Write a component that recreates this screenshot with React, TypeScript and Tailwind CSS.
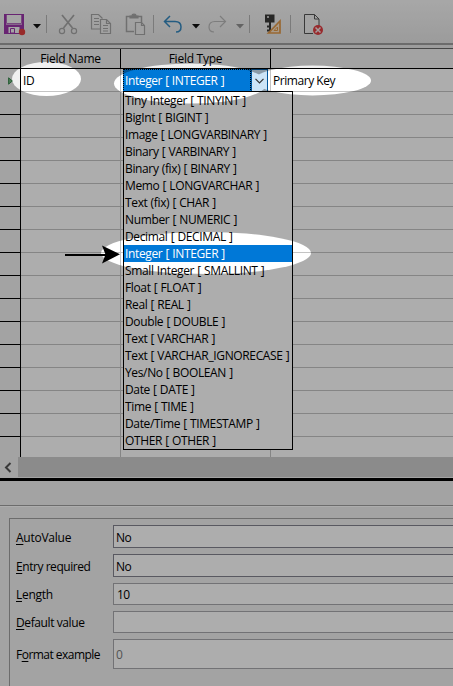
import React from "react";

const types = [
  "Tiny Integer [ TINYINT ]", "BigInt [ BIGINT ]", "Image [ LONGVARBINARY ]", "Binary [ VARBINARY ]",
  "Binary (fix) [ BINARY ]", "Memo [ LONGVARCHAR ]", "Text (fix) [ CHAR ]", "Number [ NUMERIC ]",
  "Decimal [ DECIMAL ]", "Integer [ INTEGER ]", "Small Integer [ SMALLINT ]", "Float [ FLOAT ]",
  "Real [ REAL ]", "Double [ DOUBLE ]", "Text [ VARCHAR ]", "Text [ VARCHAR_IGNORECASE ]",
  "Yes/No [ BOOLEAN ]", "Date [ DATE ]", "Time [ TIME ]", "Date/Time [ TIMESTAMP ]", "OTHER [ OTHER ]",
];

const properties = [
  { pre: "", key: "A", rest: "utoValue", value: "No", box: "h-[23px] border-[#83838f] pl-[2px]", gap: "mb-[6px]", track: "tracking-[-0.25px]" },
  { pre: "", key: "E", rest: "ntry required", value: "No", box: "h-[23px] border-[#83838f] pl-[2px]", gap: "mb-[6px]", track: "tracking-[-0.45px]" },
  { pre: "", key: "L", rest: "ength", value: "10", box: "h-[22px] border-[#a9a9ad] pl-[3px]", gap: "mb-[6px]", track: "tracking-[-0.3px]" },
  { pre: "", key: "D", rest: "efault value", value: "", box: "h-[22px] border-[#a9a9ad] pl-[3px]", gap: "mb-[6px]", track: "tracking-[-0.4px]" },
  { pre: "F", key: "o", rest: "rmat example", value: "0", box: "h-[30px] border-[#a9a9ad] pl-[2px] text-[#7b7b7b]", gap: "", track: "tracking-[-0.53px]" },
];

function Toolbar() {
  return (
    <svg className="block h-[43px] w-full shrink-0" viewBox="0 0 453 43" preserveAspectRatio="xMinYMin slice" fill="none">
      <defs>
        <linearGradient id="bar" x1="0" y1="0" x2="0" y2="1">
          <stop stopColor="#f7f7f7" />
          <stop offset="1" stopColor="#e5e5e5" />
        </linearGradient>
      </defs>
      <rect width="453" height="43" fill="url(#bar)" />
      {/* save */}
      <path d="M5 15h18v18H5z" fill="#f4f4f4" stroke="#9a35a8" strokeWidth="2" />
      <path d="M4.500 24.500h19v9.500h-19z" fill="#9a35a8" />
      <path d="M6.500 15v8.500h15V15" fill="#f4f4f4" stroke="#b26abb" />
      <path d="M8.500 27h11v6h-11z" fill="#f4f4f4" />
      <path d="M10.500 28.500h4V33h-4z" fill="#f4f4f4" stroke="#9a35a8" />
      <circle cx="22" cy="32" r="3.200" fill="#e03e3e" />
      <path d="M33 24h8l-4 4.500z" fill="#111" />
      <path d="M46.500 15v18M153.500 15v18M249.500 15v18M290.500 15v18" stroke="#b5b5b5" />
      {/* cut */}
      <g stroke="#a6a6a6" strokeWidth="1.200">
        <path d="m62 15 10.500 13M74 15 63.500 28" strokeWidth="1.700" />
        <circle cx="62" cy="31" r="2.600" /><circle cx="74" cy="31" r="2.600" />
        {/* copy */}
        <path d="M100 29h-8.500V14.500h7l4 4" />
        <path d="M94 18.500h5M94 21.500h5M94 24.500h5" />
        <path d="M100.500 19.500h6l4 4v10h-10z" fill="#eee" />
        <path d="M106.500 19.500v4h4M103 25.500h5M103 28.500h5M103 31h5" />
        {/* paste */}
        <path d="M134 31.500h-7.500v-15h15v6" strokeWidth="1.500" />
        <path d="M130 18h8v-2h-2c0-2.500-4-2.500-4 0h-2z" fill="#a6a6a6" />
        <path d="M135.500 22.500h6l3 3v9h-9z" fill="#eee" />
        <path d="M141.500 22.500v3h3" />
      </g>
      <path d="m170 16-5.500 5.500L170 27M165 21.500h10c4 0 6 2.500 6 5.500s-2 5-5 5" stroke="#3588bf" strokeWidth="1.500" />
      <path d="M192 24h8l-4 4.500z" fill="#111" />
      <path d="m220 16 5.500 5.500L220 27M225 21.500h-10c-4 0-6 2.500-6 5.500s2 5 5 5" stroke="#b8b8b8" strokeWidth="1.200" />
      <path d="M236 24h8l-4 4.500z" fill="#929292" />
      {/* index design */}
      <path d="M265 14.500h9.500v8H271v10.500l-2-1.500h-2v-2h2v-2h-2v-2h2v-3h-4z" fill="#3a3a38" />
      <path d="M267 17h2" stroke="#eee" strokeWidth="1.500" />
      <path d="M280 21v12h-11.500z" fill="#f8e3ca" stroke="#e19a4b" strokeWidth="1.700" />
      <path d="M277.500 27v3.500H274z" stroke="#e19a4b" />
      {/* remove document */}
      <path d="M305 33.500h-.5v-19h10l4.500 4.500v8M314.500 14.500V19h4.500M305 33.500h8" fill="#f1f1f1" stroke="#555" />
      <circle cx="318" cy="30" r="5" fill="#e13e43" />
      <path d="m315.500 27.500 5 5m0-5-5 5" stroke="#f5e7e7" strokeWidth="1.500" />
    </svg>
  );
}

function TableRow({ first }: { first: boolean }) {
  return (
    <div className="flex h-[23px] shrink-0">
      <div className="flex w-[21px] items-center border-r border-b border-black bg-[#f0f0f0] pl-[8px]">
        {first && <svg className="mt-[2px] h-[8px] w-[5px]" viewBox="0 0 5 8"><path d="M.6.8v6.400L4.300 4z" fill="#72b37e" stroke="#3b8a50" /></svg>}
      </div>
      <div className="flex w-[100px] items-center border-r border-b border-[#c4c4c4] pt-px pl-[2px]">{first && "ID"}</div>
      <div className="w-[150px] border-r border-b border-[#c4c4c4]" />
      <div className="flex flex-1 items-center border-b border-[#c4c4c4] pt-px pl-[2px]">{first && <span className="tracking-[-0.45px]">Primary Key</span>}</div>
    </div>
  );
}

export default function App() {
  return (
    <main className="relative flex h-[686px] w-[453px] flex-col overflow-hidden bg-[#f0f0f0] font-['Open_Sans','Noto_Sans',sans-serif] text-[12px] leading-[17px] tracking-[-0.25px] whitespace-nowrap text-black">
      <Toolbar />
      <div className="h-[6px] shrink-0 border-t-2 border-b border-t-[#a0a0a0] border-b-[#696969] bg-[#e8e8e8]" />
      <div className="flex h-[20px] shrink-0 border-b border-black text-center leading-[19px]">
        <div className="w-[21px] border-r border-black" />
        <div className="w-[100px] border-r border-black">Field Name</div>
        <div className="w-[150px] border-r border-black">Field Type</div>
      </div>
      <section className="flex h-[388px] shrink-0 flex-col overflow-hidden bg-white">
        {Array.from({ length: 17 }, (_, i) => <TableRow key={i} first={i === 0} />)}
      </section>
      <div className="flex h-[20px] shrink-0">
        <div className="flex w-[18px] items-center justify-center">
          <svg className="mr-[3px] h-[11px] w-[10px]" viewBox="0 0 10 11"><path d="M7.500 1 3 5.500 7.500 10" fill="none" stroke="#555" strokeWidth="2" /></svg>
        </div>
        <div className="flex-1 bg-[#cdcdcd]" />
      </div>
      <div className="mt-[1px] h-[3px] shrink-0 bg-black" />
      <div className="h-[24px] shrink-0" />
      <div className="h-[2px] shrink-0 border-t border-[#a0a0a0] bg-white" />
      <section className="mt-[11px] ml-[9px] flex-1 border-t border-l border-[#a0a0a0] pt-[6px] pl-[6px]">
        {properties.map((p) => (
          <div key={p.rest} className={`flex items-center ${p.gap}`}>
            <label className={`w-[97px] pt-px ${p.track}`}>
              {p.pre}<span className="underline underline-offset-2">{p.key}</span>{p.rest}
            </label>
            <div className={`flex flex-1 items-center border border-r-0 bg-white pt-px tracking-[-0.5px] ${p.box}`}>{p.value}</div>
          </div>
        ))}
      </section>

      {/* open field type selector */}
      <div className="absolute top-[69px] left-[123px] flex h-[23px] w-[147px] bg-white pr-[2px]">
        <div className="flex flex-1 items-center border border-dotted border-white bg-[#0078d7] pl-[1px] tracking-[-0.4px] text-white outline outline-1 -outline-offset-1 outline-dotted outline-black [word-spacing:0.4px]">Integer [ INTEGER ]</div>
        <div className="flex w-[17px] items-center justify-center border border-[#005499] bg-[#cce4f7]">
          <svg className="h-[6px] w-[9px]" viewBox="0 0 9 6"><path d="m.5.8 4 4 4-4" fill="none" stroke="#333" strokeWidth="1.200" /></svg>
        </div>
      </div>
      <div className="absolute top-[91px] left-[123px] w-[170px] border border-black bg-white tracking-[-0.36px] [word-spacing:0.4px]">
        {types.map((t, i) => (
          <div key={t} className={`h-[17px] pl-[1px] ${i === 9 ? "bg-[#0078d7] text-white" : ""}`}>{t}</div>
        ))}
      </div>

      {/* spotlight shade and pointer */}
      <svg className="absolute inset-0 h-full w-full" viewBox="0 0 453 686">
        <mask id="spots">
          <rect width="453" height="686" fill="white" />
          <ellipse cx="46.500" cy="79" rx="34.500" ry="17" fill="black" />
          <ellipse cx="190.500" cy="83.500" rx="76.500" ry="20" fill="black" />
          <ellipse cx="312.500" cy="80.500" rx="58.500" ry="15" fill="black" />
          <ellipse cx="206" cy="253" rx="105" ry="21" fill="black" />
        </mask>
        <rect width="453" height="686" fill="black" fillOpacity="0.32" mask="url(#spots)" />
        <path d="M65 255h42" stroke="black" strokeWidth="2" />
        <path d="m102 245.500 18 8.700-18 9.300 3.500-9z" fill="black" />
      </svg>
    </main>
  );
}
